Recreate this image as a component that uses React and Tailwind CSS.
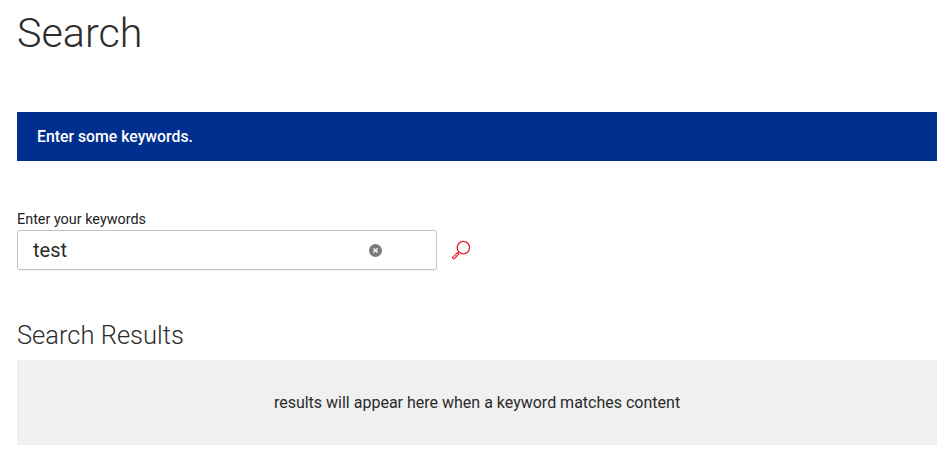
export default function App() {
  return (
    <div className="w-[949px] h-[458px] overflow-hidden bg-white pl-[17px] pr-3 font-['Roboto',sans-serif] text-[#2b2b2b]">
      <h1 className="text-[41.3px] leading-[50px] font-light h-[112px] pt-2 text-[#2d2d2d]">Search</h1>
      <div className="h-[49px] bg-[#002f8f] text-white text-[15.8px] font-medium flex items-center pl-5">Enter some keywords.</div>
      <label className="block mt-[49px] text-[14.4px] leading-5 h-5 text-[#222]">Enter your keywords</label>
      <div className="flex items-center h-10">
        <div className="w-[420px] h-10 border border-[#c4c4c4] rounded-[3px] flex items-center pl-[15px] pr-[54px] text-xl text-[#2b2b2b] shadow-[0_1px_1px_rgba(0,0,0,0.06)]">
          <span className="flex-1">test</span>
          <svg width="13" height="13" viewBox="0 0 13 13">
            <circle cx="6.5" cy="6.5" r="6.5" fill="#7a7a7a" />
            <path d="M4.4 4.4l4.2 4.2M8.6 4.4l-4.2 4.2" stroke="#fff" strokeWidth="1.4" />
          </svg>
        </div>
        <svg className="ml-[14px] mb-px" width="20" height="20" viewBox="0 0 21 21" fill="none" stroke="#e0222f">
          <circle cx="13" cy="8" r="6.5" strokeWidth="1.4" />
          <path d="M8.3 12.7l-1.4 1.4" strokeWidth="1.4" />
          <path d="M6.6 13.6l1.4 1.4-4.4 4.4c-.5.4-1.2.3-1.6-.1-.4-.5-.4-1.1 0-1.5z" strokeWidth="1.2" />
        </svg>
      </div>
      <h2 className="mt-[50px] text-[25.5px] leading-[30px] font-light text-[#2d2d2d]">Search Results</h2>
      <div className="mt-[10px] h-[85px] bg-[#f0f0f0] flex items-center justify-center text-base text-[#2b2b2b]">results will appear here when a keyword matches content</div>
    </div>
  );
}
